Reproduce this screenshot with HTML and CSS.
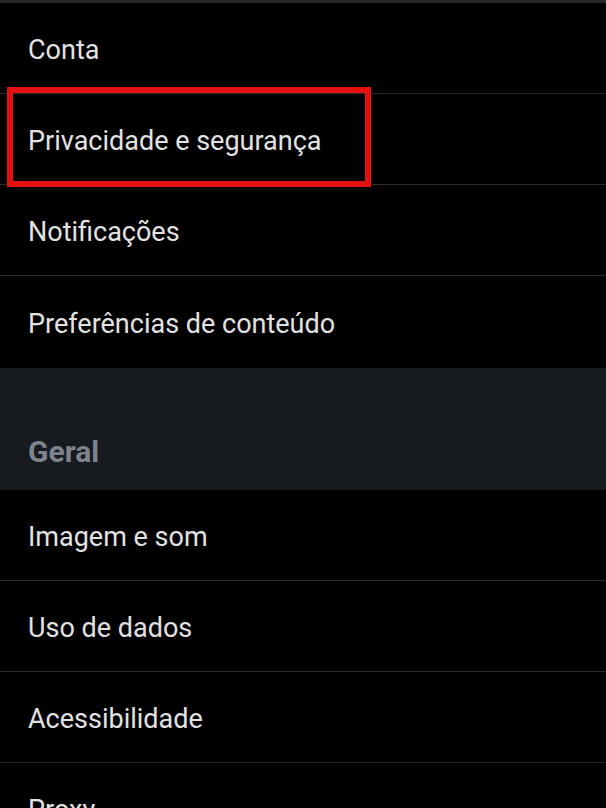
FILE: index.html
```html
<!DOCTYPE html>
<html lang="pt">
<head>
  <meta charset="UTF-8" />
  <meta name="viewport" content="width=device-width, initial-scale=1.0"/>
  <title>Configurações</title>
  <link rel="stylesheet" href="styles.css">
</head>
<body>
  <div class="top-strip"></div>

  <ul class="list">
    <li class="item">Conta</li>
    <li class="item highlighted">Privacidade e segurança</li>
    <li class="item">Notificações</li>
    <li class="item last">Preferências de conteúdo</li>
  </ul>

  <div class="section-title">Geral</div>

  <ul class="list">
    <li class="item">Imagem e som</li>
    <li class="item">Uso de dados</li>
    <li class="item">Acessibilidade</li>
    <li class="item">Proxy</li>
  </ul>
</body>
</html>
```

FILE: styles.css
```css
body {
  margin: 0;
  background-color: #000;
  font-family: Roboto, "Noto Sans", sans-serif;
  color: #e2e2e2;
  overflow: hidden;
}

.top-strip {
  height: 3px;
  background-color: #24282d;
}

.list {
  list-style: none;
  margin: 0;
  padding: 0;
}

.item {
  position: relative;
  display: flex;
  align-items: center;
  box-sizing: border-box;
  height: 91px;
  padding: 3px 0 0 28px;
  font-size: 27px;
  border-bottom: 1px solid #2c2c2c;
}

.item.last {
  height: 92px;
  border-bottom: none;
}

/* red marker round the second row */
.highlighted::after {
  content: "";
  position: absolute;
  left: 7px;
  top: -7px;
  width: 352px;
  height: 88px;
  border: 6px solid #e3100f;
}

.section-title {
  height: 122px;
  box-sizing: border-box;
  display: flex;
  align-items: flex-end;
  padding: 0 0 21px 28px;
  background-color: #171a1f;
  color: #7e848d;
  font-size: 30px;
  font-weight: bold;
}
```
